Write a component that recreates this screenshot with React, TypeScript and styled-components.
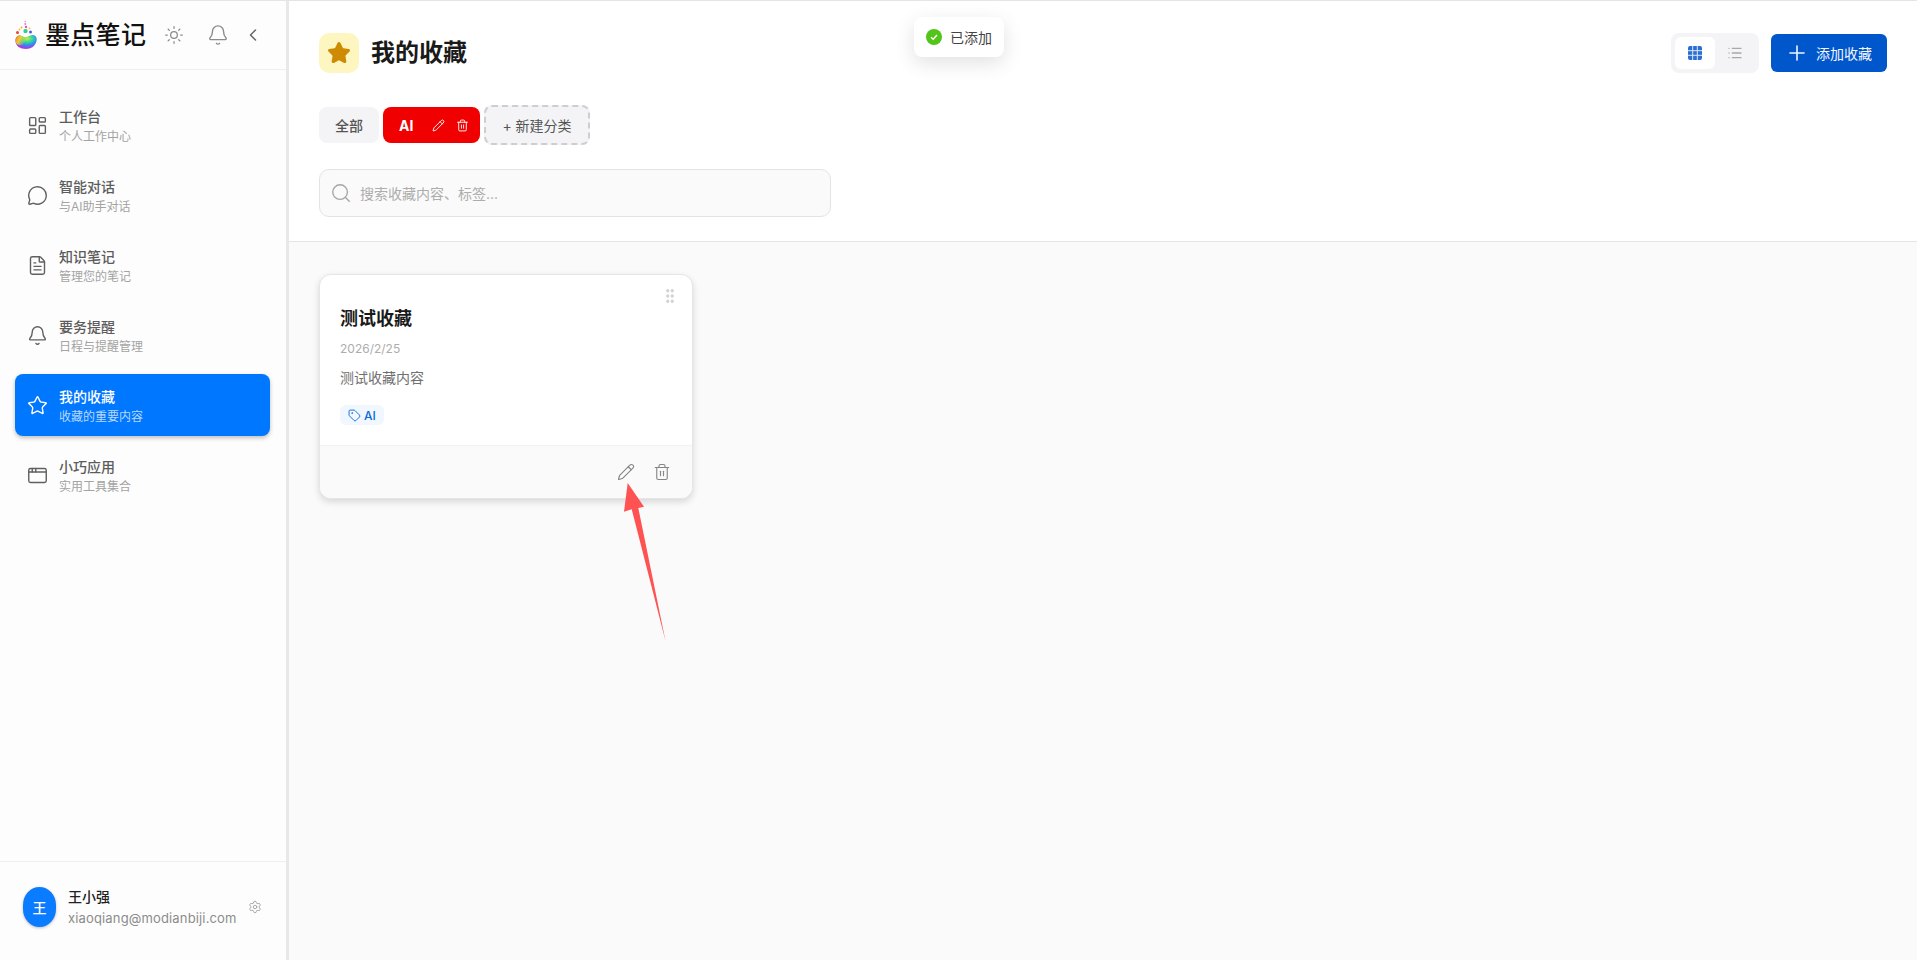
import React from "react";
import styled, { createGlobalStyle } from "styled-components";
import {
  AppWindow,
  Bell,
  ChevronLeft,
  FileText,
  GripVertical,
  LayoutDashboard,
  List,
  MessageCircle,
  Pencil,
  Plus,
  Search,
  Settings,
  Star,
  Sun,
  Tag,
  Trash2,
} from "lucide-react";

const GlobalStyle = createGlobalStyle`
  html, body {
    margin: 0;
    padding: 0;
    height: 100%;
    overflow: hidden;
    background: #fff;
    font-family: Inter, "Noto Sans CJK SC", sans-serif;
  }
  * {
    box-sizing: border-box;
  }
`;

const NAV_ITEMS = [
  { icon: LayoutDashboard, title: "工作台", desc: "个人工作中心" },
  { icon: MessageCircle, title: "智能对话", desc: "与AI助手对话" },
  { icon: FileText, title: "知识笔记", desc: "管理您的笔记" },
  { icon: Bell, title: "要务提醒", desc: "日程与提醒管理" },
  { icon: Star, title: "我的收藏", desc: "收藏的重要内容", active: true },
  { icon: AppWindow, title: "小巧应用", desc: "实用工具集合" },
];

const Logo = () => (
  <svg width="24" height="30" viewBox="0 0 24 30">
    <defs>
      <radialGradient id="logoCore" cx="0.55" cy="0.25" r="0.85">
        <stop offset="0" stopColor="#c8ee3a" />
        <stop offset="0.3" stopColor="#35d6a0" />
        <stop offset="0.55" stopColor="#2f8df2" />
        <stop offset="0.8" stopColor="#a43be8" />
        <stop offset="1" stopColor="#ee2fb0" />
      </radialGradient>
      <linearGradient id="logoSide" x1="0" y1="0" x2="1" y2="0.4">
        <stop offset="0" stopColor="#ff6a1f" />
        <stop offset="0.45" stopColor="#ffd21f" stopOpacity="0.9" />
        <stop offset="1" stopColor="#ffd21f" stopOpacity="0" />
      </linearGradient>
    </defs>
    <path
      d="M1.500 21c-.2-3.500 2-6 4.800-5.500 2.200.4 3.700 2 6 1.500 3-.6 5-2.500 7.700-1.700 2.400.7 3.200 3.300 2.500 5.700C21.500 26 17 29 12 29 6 29 1.700 26 1.500 21z"
      fill="url(#logoCore)"
    />
    <path
      d="M1.500 21c-.2-3.500 2-6 4.800-5.500 2.200.4 3.700 2 6 1.500 .5 2.500-1 6-4 8-3 .5-6.600-.5-6.800-4z"
      fill="url(#logoSide)"
    />
    <circle cx="11.300" cy="1.500" r=".8" fill="#f08ac8" />
    <circle cx="11.300" cy="4" r="1" fill="#f27ab0" />
    <circle cx="12" cy="7" r="1.200" fill="#ea4fc0" />
    <circle cx="7.500" cy="7.500" r=".9" fill="#f5a623" />
    <rect x="9.500" y="9" width="4" height="4" rx="1.500" fill="#2fd08a" />
    <circle cx="15.500" cy="8.500" r=".9" fill="#f5c623" />
    <circle cx="5.500" cy="9.500" r=".9" fill="#f7b733" />
    <circle cx="16.500" cy="12" r="1.500" fill="#4a5cf0" />
    <circle cx="3.500" cy="12.500" r="1.500" fill="#f0402f" />
  </svg>
);

const Arrow = () => (
  <ArrowLayer width="50" height="162" viewBox="0 0 50 162">
    <path d="M7.700 3L24 26.700L18.300 28L45.500 161L11.700 29.300L4 31.700z" fill="#ff5252" />
  </ArrowLayer>
);

const GridIcon = () => (
  <svg width="14" height="14" viewBox="0 0 14 14">
    <rect width="14" height="14" rx="2" fill="#2b6fd4" />
    <path d="M4.700 0v14M9.300 0v14M0 4.700h14M0 9.300h14" stroke="#dfe9f8" strokeWidth="1" />
  </svg>
);

const App = () => {
  return (
    <Page>
      <GlobalStyle />
      <Sidebar>
        <Brand>
          <Logo />
          <BrandName>墨点笔记</BrandName>
          <BrandTools>
            <Sun size={20} strokeWidth={1.5} color="#8a8a8a" />
            <Bell size={22} strokeWidth={1.5} color="#8a8a8a" />
            <BackIcon size={20} strokeWidth={1.8} color="#666" />
          </BrandTools>
        </Brand>
        <Nav>
          {NAV_ITEMS.map(item => (
            <NavItem key={item.title} $active={item.active}>
              <item.icon size={21} strokeWidth={1.6} />
              <NavText>
                <NavTitle $active={item.active}>{item.title}</NavTitle>
                <NavDesc $active={item.active}>{item.desc}</NavDesc>
              </NavText>
            </NavItem>
          ))}
        </Nav>
        <UserBar>
          <Avatar>王</Avatar>
          <UserInfo>
            <UserName>王小强</UserName>
            <UserMail>xiaoqiang@modianbiji.com</UserMail>
          </UserInfo>
          <Settings size={14} strokeWidth={1.6} color="#a3a3a3" />
        </UserBar>
      </Sidebar>
      <Main>
        <Header>
          <HeaderTop>
            <TitleGroup>
              <TitleIcon>
                <Star size={24} fill="#cf8a04" color="#cf8a04" strokeWidth={2} />
              </TitleIcon>
              <Title>我的收藏</Title>
            </TitleGroup>
            <Actions>
              <ViewToggle>
                <ViewButton $active>
                  <GridIcon />
                </ViewButton>
                <ViewButton>
                  <List size={16} strokeWidth={2} color="#a8a8a8" />
                </ViewButton>
              </ViewToggle>
              <AddButton>
                <Plus size={24} strokeWidth={1.6} />
                添加收藏
              </AddButton>
            </Actions>
          </HeaderTop>
          <Tabs>
            <TabAll>全部</TabAll>
            <TabActive>
              AI
              <TabTools>
                <Pencil size={13} strokeWidth={1.7} />
                <Trash2 size={13} strokeWidth={1.7} />
              </TabTools>
            </TabActive>
            <TabNew>+ 新建分类</TabNew>
          </Tabs>
          <SearchBox>
            <Search size={22} strokeWidth={1.5} color="#a6a6a6" />
            <SearchInput placeholder="搜索收藏内容、标签..." />
          </SearchBox>
        </Header>
        <Content>
          <Card>
            <CardBody>
              <Grip>
                <GripVertical size={18} strokeWidth={2.4} color="#d2d2d2" />
              </Grip>
              <CardTitle>测试收藏</CardTitle>
              <CardDate>2026/2/25</CardDate>
              <CardText>测试收藏内容</CardText>
              <CardTag>
                <Tag size={13} strokeWidth={1.7} />
                AI
              </CardTag>
            </CardBody>
            <CardFooter>
              <Pencil size={18} strokeWidth={1.5} color="#858585" />
              <Trash2 size={18} strokeWidth={1.5} color="#858585" />
            </CardFooter>
          </Card>
        </Content>
      </Main>
      <Toast>
        <ToastCheck>
          <svg width="10" height="10" viewBox="0 0 10 10">
            <path d="M2 5.200L4.200 7.300L8 3" stroke="#fff" strokeWidth="1.400" fill="none" />
          </svg>
        </ToastCheck>
        已添加
      </Toast>
      <Arrow />
    </Page>
  );
};

export default App;

const Page = styled.div`
  position: relative;
  display: flex;
  width: 1917px;
  height: 960px;
  border-top: 1px solid #e5e5e5;
  overflow: hidden;
`;

const Sidebar = styled.aside`
  display: flex;
  flex-direction: column;
  width: 289px;
  flex: none;
  background: #fdfdfd;
  border-right: 3px solid #e8e8e8;
`;

const Brand = styled.div`
  display: flex;
  align-items: center;
  height: 69px;
  padding: 0 0 0 14px;
  border-bottom: 1px solid #efefef;
`;

const BrandName = styled.div`
  margin-left: 7px;
  font-size: 25px;
  line-height: 30px;
  font-weight: 500;
  color: #111;
  letter-spacing: 0.3px;
`;

const BrandTools = styled.div`
  display: flex;
  align-items: center;
  gap: 23px;
  margin-left: 18px;
`;

const BackIcon = styled(ChevronLeft)`
  margin-left: -9px;
`;

const Nav = styled.nav`
  display: flex;
  flex-direction: column;
  gap: 8px;
  flex: 1;
  padding: 24px 16px 0 15px;
`;

const NavItem = styled.div<{ $active?: boolean }>`
  display: flex;
  align-items: center;
  gap: 11px;
  height: 62px;
  padding: 0 12px;
  border-radius: 8px;
  color: ${props => (props.$active ? "#fff" : "#606060")};
  background: ${props => (props.$active ? "#0077ff" : "transparent")};
  box-shadow: ${props => (props.$active ? "0 2px 4px rgba(0, 0, 0, 0.25)" : "none")};
`;

const NavText = styled.div`
  display: flex;
  flex-direction: column;
  gap: 3px;
  padding-top: 2px;
`;

const NavTitle = styled.div<{ $active?: boolean }>`
  font-size: 14px;
  line-height: 19px;
  font-weight: 500;
  color: ${props => (props.$active ? "#fff" : "#5c5c5c")};
`;

const NavDesc = styled.div<{ $active?: boolean }>`
  font-size: 12px;
  line-height: 16px;
  color: ${props => (props.$active ? "#b8d8ff" : "#a3a3a3")};
`;

const UserBar = styled.div`
  display: flex;
  align-items: center;
  height: 99px;
  padding: 0 24px 8px 23px;
  border-top: 1px solid #efefef;
`;

const Avatar = styled.div`
  display: flex;
  align-items: center;
  justify-content: center;
  width: 33px;
  height: 40px;
  flex: none;
  border-radius: 50%/45%;
  background: #0a7cff;
  color: #fff;
  font-size: 14px;
  font-weight: 500;
  box-shadow: 0 1px 3px rgba(0, 0, 0, 0.25);
`;

const UserInfo = styled.div`
  display: flex;
  flex-direction: column;
  gap: 3px;
  flex: 1;
  margin-left: 12px;
`;

const UserName = styled.div`
  font-size: 14px;
  line-height: 19px;
  font-weight: 500;
  color: #222;
`;

const UserMail = styled.div`
  font-size: 13px;
  line-height: 18px;
  letter-spacing: 0.15px;
  color: #8c8c8c;
`;

const Main = styled.main`
  display: flex;
  flex-direction: column;
  flex: 1;
  background: #fafafa;
`;

const Header = styled.header`
  height: 241px;
  padding: 32px 30px 0;
  background: #fff;
  border-bottom: 1px solid #e5e5e5;
`;

const HeaderTop = styled.div`
  display: flex;
  align-items: center;
  justify-content: space-between;
  height: 40px;
`;

const TitleGroup = styled.div`
  display: flex;
  align-items: center;
  gap: 12px;
`;

const TitleIcon = styled.div`
  display: flex;
  align-items: center;
  justify-content: center;
  width: 40px;
  height: 40px;
  border-radius: 10px;
  background: #fef6c0;
`;

const Title = styled.h1`
  margin: 0;
  font-size: 24px;
  line-height: 32px;
  font-weight: 700;
  color: #1a1a1a;
`;

const Actions = styled.div`
  display: flex;
  align-items: center;
  gap: 12px;
`;

const ViewToggle = styled.div`
  display: flex;
  padding: 4px;
  border-radius: 8px;
  background: #f4f4f6;
`;

const ViewButton = styled.div<{ $active?: boolean }>`
  display: flex;
  align-items: center;
  justify-content: center;
  width: 40px;
  height: 32px;
  border-radius: 6px;
  background: ${props => (props.$active ? "#fff" : "transparent")};
`;

const AddButton = styled.button`
  display: flex;
  align-items: center;
  gap: 7px;
  width: 116px;
  height: 38px;
  padding: 0 0 0 14px;
  border: none;
  border-radius: 6px;
  background: #0057cc;
  color: #f2f6fd;
  font-family: inherit;
  font-size: 14px;
`;

const Tabs = styled.div`
  display: flex;
  align-items: center;
  gap: 4px;
  margin-top: 32px;
  height: 40px;
`;

const TabAll = styled.div`
  display: flex;
  align-items: center;
  justify-content: center;
  width: 60px;
  height: 36px;
  border-radius: 8px;
  background: #f4f4f6;
  color: #555;
  font-size: 14px;
  font-weight: 500;
`;

const TabActive = styled.div`
  display: flex;
  align-items: center;
  justify-content: space-between;
  width: 97px;
  height: 36px;
  padding: 0 11px 0 16px;
  border-radius: 8px;
  background: #f00000;
  color: #fff;
  font-size: 14px;
  font-weight: 700;
`;

const TabTools = styled.div`
  display: flex;
  align-items: center;
  gap: 11px;
`;

const TabNew = styled.div`
  display: flex;
  align-items: center;
  justify-content: center;
  width: 106px;
  height: 40px;
  border: 2px dashed #cdcdd2;
  border-radius: 8px;
  background: #f4f4f6;
  color: #555;
  font-size: 14px;
`;

const SearchBox = styled.div`
  display: flex;
  align-items: center;
  gap: 8px;
  width: 512px;
  height: 48px;
  margin-top: 24px;
  padding: 0 10px;
  border: 1px solid #e3e3e3;
  border-radius: 10px;
  background: #fafafa;
`;

const SearchInput = styled.input`
  flex: 1;
  padding: 0;
  border: none;
  outline: none;
  background: transparent;
  font-family: inherit;
  font-size: 14px;

  &::placeholder {
    color: #adadad;
  }
`;

const Content = styled.div`
  flex: 1;
  padding: 32px 30px;
`;

const Card = styled.article`
  width: 374px;
  height: 225px;
  display: flex;
  flex-direction: column;
  border: 1px solid #e6e6e6;
  border-radius: 12px;
  background: #fff;
  overflow: hidden;
  box-shadow: 0 3px 7px rgba(0, 0, 0, 0.14);
`;

const CardBody = styled.div`
  position: relative;
  flex: 1;
  padding: 31px 20px 0;
`;

const Grip = styled.div`
  position: absolute;
  top: 12px;
  right: 13px;
  line-height: 0;
`;

const CardTitle = styled.h3`
  margin: 0;
  font-size: 18px;
  line-height: 26px;
  font-weight: 700;
  color: #1a1a1a;
`;

const CardDate = styled.div`
  margin-top: 9px;
  font-size: 12px;
  line-height: 16px;
  color: #adadad;
`;

const CardText = styled.div`
  margin-top: 11px;
  font-size: 14px;
  line-height: 20px;
  color: #707070;
`;

const CardTag = styled.div`
  display: inline-flex;
  align-items: center;
  gap: 3px;
  height: 20px;
  margin-top: 17px;
  padding: 0 8px;
  border-radius: 6px;
  background: #f0f7ff;
  color: #0a6ad6;
  font-size: 12px;
  font-weight: 500;
`;

const CardFooter = styled.footer`
  display: flex;
  align-items: center;
  justify-content: flex-end;
  gap: 18px;
  height: 53px;
  padding: 0 21px 0 0;
  border-top: 1px solid #f2f2f2;
  background: #fafafa;
`;

const Toast = styled.div`
  position: absolute;
  top: 16px;
  left: 914px;
  display: flex;
  align-items: center;
  gap: 8px;
  width: 90px;
  height: 40px;
  padding-left: 12px;
  border-radius: 8px;
  background: #fff;
  color: #444;
  font-size: 14px;
  box-shadow: 0 6px 20px rgba(0, 0, 0, 0.12);
`;

const ToastCheck = styled.span`
  display: flex;
  align-items: center;
  justify-content: center;
  width: 16px;
  height: 16px;
  border-radius: 50%;
  background: #52c41a;
`;

const ArrowLayer = styled.svg`
  position: absolute;
  top: 479px;
  left: 620px;
`;
